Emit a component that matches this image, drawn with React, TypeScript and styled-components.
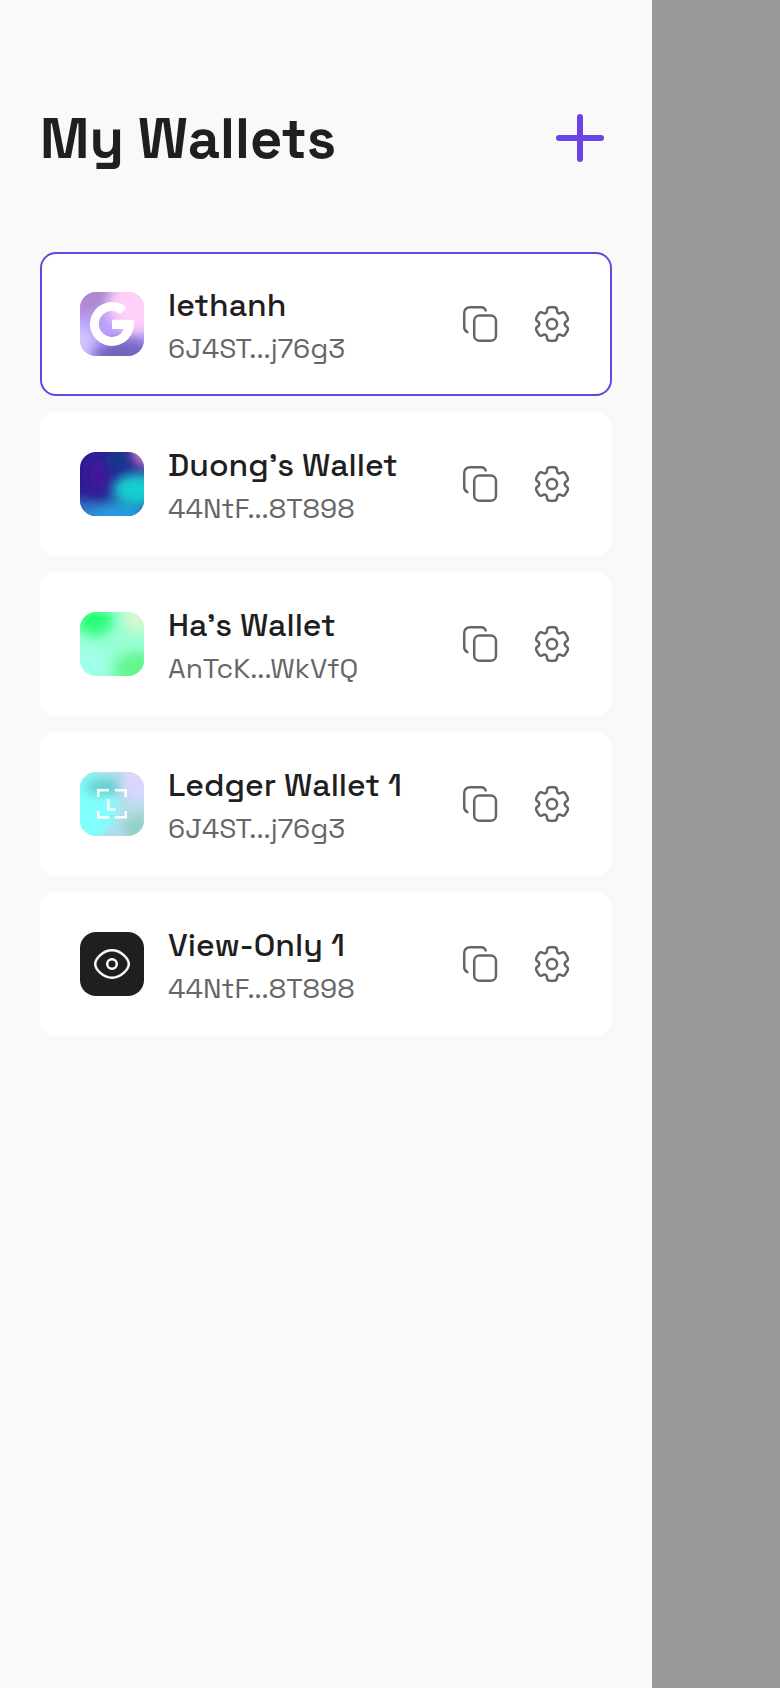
import React, { useId } from "react";
import styled, { createGlobalStyle } from "styled-components";

const GlobalStyle = createGlobalStyle`
  *, *::before, *::after { box-sizing: border-box; }
  body {
    margin: 0;
    background: #999999;
    font-family: "Space Grotesk", Inter, sans-serif;
    color: #1f1f1f;
  }
`;

const Screen = styled.div`
  display: flex;
  min-height: 100vh;
  padding-right: 128px;
  background: #999999;
`;

const Drawer = styled.main`
  flex: 1;
  min-width: 0;
  padding: 102px 40px 40px;
  background: #f9f9f9;
`;

const Header = styled.header`
  display: flex;
  align-items: center;
  justify-content: space-between;
  margin-bottom: 78px;
`;

const Title = styled.h1`
  margin: 0;
  padding-top: 2px;
  font-size: 56px;
  line-height: 70px;
  font-weight: 700;
`;

const IconButton = styled.button<{ $size: number }>`
  display: flex;
  flex: none;
  width: ${(p) => p.$size}px;
  height: ${(p) => p.$size}px;
  padding: 0;
  border: 0;
  background: none;
  color: inherit;
  cursor: pointer;

  svg { display: block; width: 100%; height: 100%; }
`;

const AddButton = styled(IconButton)`
  color: #6944e2;
`;

const WalletList = styled.ul`
  display: flex;
  flex-direction: column;
  gap: 16px;
  margin: 0;
  padding: 0;
  list-style: none;
`;

const WalletCard = styled.li<{ $active?: boolean }>`
  display: flex;
  align-items: center;
  gap: 24px;
  padding: 24px 38px;
  border: 2px solid ${(p) => (p.$active ? "#6944e2" : "#ffffff")};
  border-radius: 16px;
  background: #ffffff;
`;

const Avatar = styled.svg`
  display: block;
  flex: none;
  width: 64px;
  height: 64px;
  border-radius: 16px;
`;

const Details = styled.div`
  flex: 1;
  min-width: 0;
  padding-top: 6px;
  white-space: nowrap;
`;

const Name = styled.h2`
  margin: 0;
  font-size: 32px;
  line-height: 42px;
  font-weight: 500;
`;

const Address = styled.p`
  margin: 0;
  font-size: 28px;
  line-height: 44px;
  font-weight: 400;
  color: #666666;
`;

const Actions = styled.div`
  display: flex;
  gap: 32px;
  color: #666666;
`;

function PlusIcon() {
  return (
    <svg viewBox="0 0 64 64" fill="none" stroke="currentColor" strokeWidth="6" strokeLinecap="round" aria-hidden="true">
      <path d="M32 11V53M11 32H53" />
    </svg>
  );
}

function CopyIcon() {
  return (
    <svg viewBox="0 0 40 40" fill="none" stroke="currentColor" strokeWidth="2.5" strokeLinecap="round" aria-hidden="true">
      <rect x="14.2" y="11.5" width="21.8" height="25.2" rx="5.2" />
      <path d="M25.7 6.4C24.9 4.3 23.4 3.3 21.2 3.3H10.5C6.6 3.3 4.2 5.7 4.2 9.6V22.4C4.2 25.2 5.2 27.2 7.4 28.2" />
    </svg>
  );
}

type Point = [number, number];

const turn = ([x, y]: Point, step: number) => {
  const a = (step * Math.PI) / 3;
  const px = 20 + x * Math.cos(a) - y * Math.sin(a);
  const py = 20 + x * Math.sin(a) + y * Math.cos(a);
  return `${px.toFixed(2)} ${py.toFixed(2)}`;
};

// One tooth and the valley after it, repeated six times round the centre.
const gearPath =
  [0, 1, 2, 3, 4, 5]
    .map((s) => {
      const p = (x: number, y: number) => turn([x, y], s);
      const q = (x: number, y: number) => turn([x, y], s + 1);
      return (
        `${s ? "L" : "M"}${p(-2, -16.7)} L${p(2, -16.7)} ` +
        `C${p(3.9, -16.7)} ${p(5, -15.4)} ${p(5, -13.8)} ` +
        `C${p(5, -11)} ${p(7, -9.8)} ${q(-5, -13.8)} ` +
        `C${q(-5, -15.4)} ${q(-3.9, -16.7)} ${q(-2, -16.7)}`
      );
    })
    .join(" ") + "Z";

function GearIcon() {
  return (
    <svg viewBox="0 0 40 40" fill="none" stroke="currentColor" strokeWidth="2.5" strokeLinejoin="round" aria-hidden="true">
      <path d={gearPath} />
      <circle cx="20" cy="20" r="5.1" />
    </svg>
  );
}

const googleMark = (
  <path fill="#ffffff" d="M46.7 15.7A22 22 0 1 0 53.5 27.7H32V37H43.8A13 13 0 1 1 40.2 22Z" />
);

const ledgerMark = (
  <path
    fill="none"
    stroke="#ffffff"
    strokeWidth="2.5"
    d="M18.3 25V18.3H29M35 18.3H45.7V25M18.3 39V45.3H29M35 45.3H45.7V39M28.3 27V37.5H35.5"
  />
);

const eyeMark = (
  <g fill="none" stroke="#f9f9f9" strokeWidth="2.5">
    <path d="M15.2 32C15.2 27.2 22.5 18.3 32 18.3S48.8 27.2 48.8 32 41.5 45.7 32 45.7 15.2 36.8 15.2 32Z" />
    <circle cx="32" cy="32" r="4.8" />
  </g>
);

// Colour, centre x, centre y, radius x, radius y.
type Blob = [string, number, number, number, number];
type Art = { base: string; blobs: Blob[] };

const art: Record<string, Art> = {
  lilac: {
    base: "#b8a0fa",
    blobs: [
      ["#b088d0", 6, 2, 26, 20],
      ["#ffd0f8", 58, 14, 30, 28],
      ["#cfc4ff", 0, 50, 14, 16],
      ["#7564be", 46, 66, 32, 19],
    ],
  },
  ocean: {
    base: "#2a2090",
    blobs: [
      ["#42149a", 18, 22, 12, 20],
      ["#2e78c8", 4, 66, 20, 18],
      ["#2699dc", 38, 66, 30, 18],
      ["#103e8c", 37, 8, 12, 10],
      ["#14cdd0", 58, 38, 26, 17],
      ["#d080cc", 66, 0, 14, 15],
    ],
  },
  mint: {
    base: "#98ffd4",
    blobs: [
      ["#a0ffec", 8, 52, 18, 18],
      ["#64f690", 58, 58, 24, 18],
      ["#d4f8cc", 58, 6, 16, 14],
      ["#2aff78", 15, 9, 18, 15],
    ],
  },
  aqua: {
    base: "#b8dce8",
    blobs: [
      ["#80fffc", 8, 36, 30, 36],
      ["#62c6c6", 24, 15, 19, 7],
      ["#dcd6ff", 58, 8, 16, 22],
      ["#94d0c8", 58, 56, 16, 13],
      ["#b0d4f0", 32, 66, 9, 8],
    ],
  },
  black: { base: "#1f1f1f", blobs: [] },
};

function WalletAvatar({ look, mark }: { look: Art; mark?: React.ReactNode }) {
  const blur = useId();
  return (
    <Avatar viewBox="0 0 64 64" aria-hidden="true">
      <filter id={blur} x="-50%" y="-50%" width="200%" height="200%">
        <feGaussianBlur stdDeviation="6" />
      </filter>
      <rect width="64" height="64" fill={look.base} />
      {look.blobs.map(([color, cx, cy, rx, ry]) => (
        <ellipse key={color} cx={cx} cy={cy} rx={rx} ry={ry} fill={color} filter={`url(#${blur})`} />
      ))}
      {mark}
    </Avatar>
  );
}

const wallets = [
  { name: "lethanh", address: "6J4ST...j76g3", look: art.lilac, mark: googleMark, active: true },
  { name: "Duong’s Wallet", address: "44NtF...8T898", look: art.ocean },
  { name: "Ha’s Wallet", address: "AnTcK...WkVfQ", look: art.mint },
  { name: "Ledger Wallet 1", address: "6J4ST...j76g3", look: art.aqua, mark: ledgerMark },
  { name: "View-Only 1", address: "44NtF...8T898", look: art.black, mark: eyeMark },
];

export default function App() {
  return (
    <>
      <GlobalStyle />
      <Screen>
        <Drawer>
          <Header>
            <Title>My Wallets</Title>
            <AddButton type="button" $size={64} aria-label="Add wallet">
              <PlusIcon />
            </AddButton>
          </Header>
          <WalletList>
            {wallets.map((w) => (
              <WalletCard key={w.name} $active={w.active}>
                <WalletAvatar look={w.look} mark={w.mark} />
                <Details>
                  <Name>{w.name}</Name>
                  <Address>{w.address}</Address>
                </Details>
                <Actions>
                  <IconButton type="button" $size={40} aria-label={`Copy address of ${w.name}`}>
                    <CopyIcon />
                  </IconButton>
                  <IconButton type="button" $size={40} aria-label={`Settings of ${w.name}`}>
                    <GearIcon />
                  </IconButton>
                </Actions>
              </WalletCard>
            ))}
          </WalletList>
        </Drawer>
      </Screen>
    </>
  );
}
